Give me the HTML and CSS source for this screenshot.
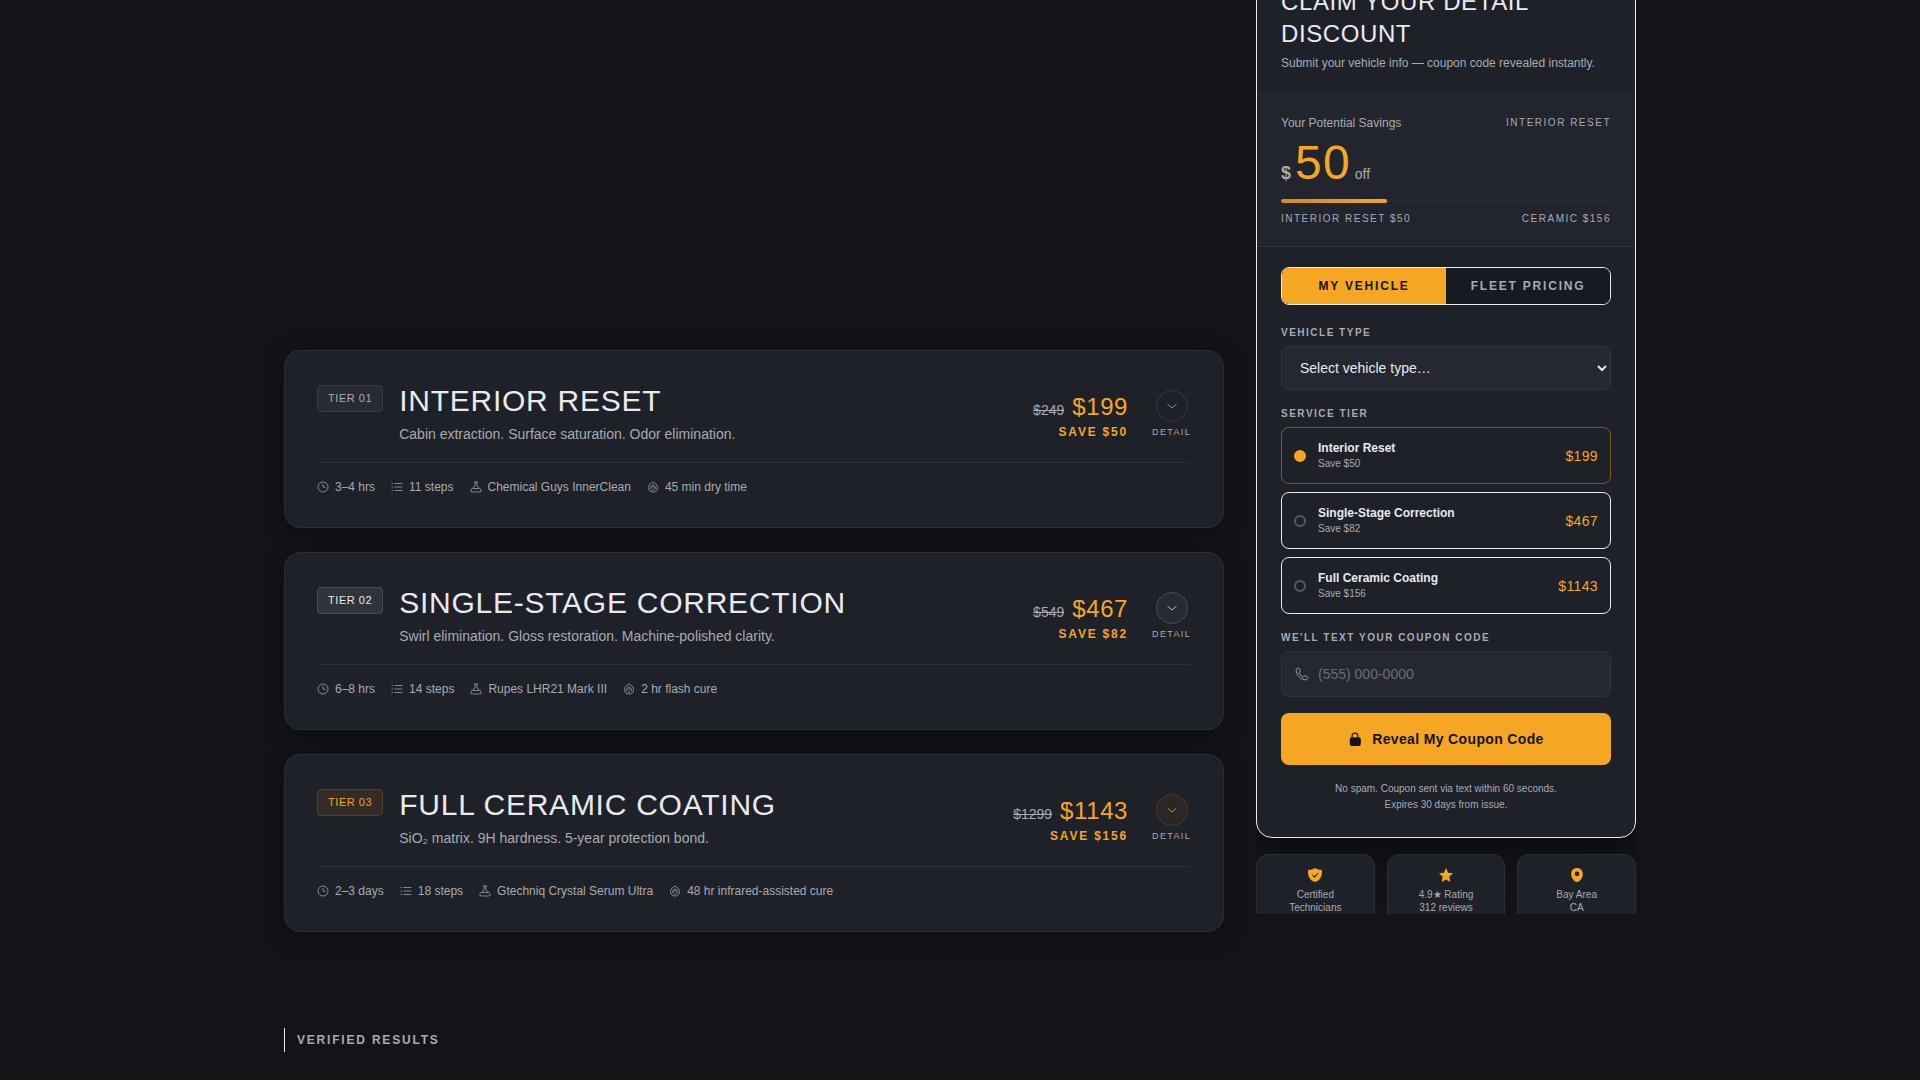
FILE: index.html
```html
<!DOCTYPE html>
<html lang="en">
<head>
    <meta charset="UTF-8">
    <meta name="viewport" content="width=device-width, initial-scale=1.0">
    <title>Detail Packages</title>
    <link rel="stylesheet" href="styles.css">
</head>
<body>
<svg class="sprite" aria-hidden="true">
    <symbol id="icon-clock" viewBox="0 0 24 24"><circle cx="12" cy="12" r="10"/><path d="M12 6v6l5 1"/></symbol>
    <symbol id="icon-list" viewBox="0 0 24 24"><path d="M7 5h16M7 12h16M7 19h16M1 5h3M1 12h3M1 19h3"/></symbol>
    <symbol id="icon-flask" viewBox="0 0 24 24"><path d="M8 2h8M10 2v8l-8 7q-2 5 3 5h14q5 0 3-5l-8-7V2M6 15h12"/></symbol>
    <symbol id="icon-cure" viewBox="0 0 24 24"><path d="M12 2c2 2 4 2 6 4 5 5 4 16-6 16S1 11 6 6c2-2 4-2 6-4z"/><path d="M8 17c-2-4 0-8 4-9 4 1 6 5 4 9M12 21v-5M9 13c2-2 4-2 6 0"/></symbol>
    <symbol id="icon-chevron" viewBox="0 0 24 24"><path d="M3 8l9 8 9-8"/></symbol>
    <symbol id="icon-phone" viewBox="0 0 24 24"><path d="M2 5c0 9 8 17 17 17 2 0 3-2 3-4 0-1-1-2-5-3-1 0-2 2-3 2-3-1-6-4-7-7 0-1 2-2 2-3C8 3 7 2 6 2 4 2 2 3 2 5z"/></symbol>
    <symbol id="icon-lock" viewBox="0 0 24 24"><path d="M7 10V7a5 5 0 0 1 10 0v3" fill="none" stroke="currentColor" stroke-width="2"/><rect x="3" y="9" width="19" height="15" rx="4"/></symbol>
    <symbol id="icon-shield" viewBox="0 0 24 24"><path fill-rule="evenodd" d="M12 0c3 2 6 3 10 3 1 0 2 1 2 2 0 10-3 16-12 19C3 21 0 15 0 5c0-1 1-2 2-2 4 0 7-1 10-3zM7 12l4 5 7-8-1-1-6 6-3-3z"/></symbol>
    <symbol id="icon-star" viewBox="0 0 24 24"><path d="M12 0l3.600 8 8.400 1-6.300 6 1.700 9-7.400-4.500L4.600 24l1.700-9L0 9l8.400-1z"/></symbol>
    <symbol id="icon-pin" viewBox="0 0 24 24"><path fill-rule="evenodd" d="M12 0c6 0 10 4 10 10 0 7-5 14-10 14S2 17 2 10C2 4 6 0 12 0zM12 6a4 4 0 1 0 0 8 4 4 0 0 0 0-8z"/></symbol>
</svg>

<div class="layout">
    <main class="tiers">
        <article class="tier tier-1">
            <div class="tier-head">
                <span class="badge">TIER 01</span>
                <div class="tier-name">
                    <h2>INTERIOR RESET</h2>
                    <p>Cabin extraction. Surface saturation. Odor elimination.</p>
                </div>
                <div class="tier-price">
                    <div class="amounts"><s>$249</s><strong>$199</strong></div>
                    <div class="save">SAVE $50</div>
                </div>
                <button class="detail" type="button">
                    <span class="circle"><svg><use href="#icon-chevron"/></svg></span>
                    DETAIL
                </button>
            </div>
            <ul class="meta">
                <li><svg><use href="#icon-clock"/></svg>3–4 hrs</li>
                <li><svg><use href="#icon-list"/></svg>11 steps</li>
                <li><svg><use href="#icon-flask"/></svg>Chemical Guys InnerClean</li>
                <li><svg><use href="#icon-cure"/></svg>45 min dry time</li>
            </ul>
        </article>

        <article class="tier tier-2">
            <div class="tier-head">
                <span class="badge">TIER 02</span>
                <div class="tier-name">
                    <h2>SINGLE-STAGE CORRECTION</h2>
                    <p>Swirl elimination. Gloss restoration. Machine-polished clarity.</p>
                </div>
                <div class="tier-price">
                    <div class="amounts"><s>$549</s><strong>$467</strong></div>
                    <div class="save">SAVE $82</div>
                </div>
                <button class="detail" type="button">
                    <span class="circle"><svg><use href="#icon-chevron"/></svg></span>
                    DETAIL
                </button>
            </div>
            <ul class="meta">
                <li><svg><use href="#icon-clock"/></svg>6–8 hrs</li>
                <li><svg><use href="#icon-list"/></svg>14 steps</li>
                <li><svg><use href="#icon-flask"/></svg>Rupes LHR21 Mark III</li>
                <li><svg><use href="#icon-cure"/></svg>2 hr flash cure</li>
            </ul>
        </article>

        <article class="tier tier-3">
            <div class="tier-head">
                <span class="badge">TIER 03</span>
                <div class="tier-name">
                    <h2>FULL CERAMIC COATING</h2>
                    <p>SiO₂ matrix. 9H hardness. 5-year protection bond.</p>
                </div>
                <div class="tier-price">
                    <div class="amounts"><s>$1299</s><strong>$1143</strong></div>
                    <div class="save">SAVE $156</div>
                </div>
                <button class="detail" type="button">
                    <span class="circle"><svg><use href="#icon-chevron"/></svg></span>
                    DETAIL
                </button>
            </div>
            <ul class="meta">
                <li><svg><use href="#icon-clock"/></svg>2–3 days</li>
                <li><svg><use href="#icon-list"/></svg>18 steps</li>
                <li><svg><use href="#icon-flask"/></svg>Gtechniq Crystal Serum Ultra</li>
                <li><svg><use href="#icon-cure"/></svg>48 hr infrared-assisted cure</li>
            </ul>
        </article>

        <h3 class="section-title">VERIFIED RESULTS</h3>
    </main>

    <aside class="sidebar">
        <form class="claim">
            <header class="claim-head">
                <h2>CLAIM YOUR DETAIL DISCOUNT</h2>
                <p>Submit your vehicle info — coupon code revealed instantly.</p>
            </header>

            <section class="savings">
                <div class="split">
                    <span class="savings-label">Your Potential Savings</span>
                    <span class="caps">INTERIOR RESET</span>
                </div>
                <div class="savings-amount">
                    <span class="currency">$</span>
                    <span class="number">50</span>
                    <span class="off">off</span>
                </div>
                <div class="bar"><div class="bar-fill" style="width: 32%"></div></div>
                <div class="split range">
                    <span class="caps">INTERIOR RESET $50</span>
                    <span class="caps">CERAMIC $156</span>
                </div>
            </section>

            <div class="claim-body">
                <div class="toggle">
                    <button class="active" type="button">MY VEHICLE</button>
                    <button type="button">FLEET PRICING</button>
                </div>

                <label class="field-label" for="vehicleType">VEHICLE TYPE</label>
                <select id="vehicleType">
                    <option>Select vehicle type…</option>
                    <option>Sedan</option>
                    <option>SUV</option>
                    <option>Truck</option>
                </select>

                <fieldset>
                    <legend class="field-label">SERVICE TIER</legend>
                    <label class="option">
                        <input type="radio" name="tier" checked>
                        <span class="option-text"><b>Interior Reset</b><small>Save $50</small></span>
                        <span class="option-price">$199</span>
                    </label>
                    <label class="option">
                        <input type="radio" name="tier">
                        <span class="option-text"><b>Single-Stage Correction</b><small>Save $82</small></span>
                        <span class="option-price">$467</span>
                    </label>
                    <label class="option">
                        <input type="radio" name="tier">
                        <span class="option-text"><b>Full Ceramic Coating</b><small>Save $156</small></span>
                        <span class="option-price">$1143</span>
                    </label>
                </fieldset>

                <label class="field-label" for="phone">WE'LL TEXT YOUR COUPON CODE</label>
                <div class="phone">
                    <svg><use href="#icon-phone"/></svg>
                    <input type="tel" id="phone" placeholder="(555) 000-0000">
                </div>

                <button class="submit" type="submit">
                    <svg><use href="#icon-lock"/></svg>
                    Reveal My Coupon Code
                </button>
                <p class="fine-print">No spam. Coupon sent via text within 60 seconds.<br>Expires 30 days from issue.</p>
            </div>
        </form>

        <ul class="trust">
            <li><svg><use href="#icon-shield"/></svg>Certified<br>Technicians</li>
            <li><svg><use href="#icon-star"/></svg>4.9★ Rating<br>312 reviews</li>
            <li><svg><use href="#icon-pin"/></svg>Bay Area<br>CA</li>
        </ul>
    </aside>
</div>
</body>
</html>
```
FILE: styles.css
```css
* {
    box-sizing: border-box;
    margin: 0;
    padding: 0;
}
:root {
    --bg: #121418;
    --card: #1e2128;
    --raised: #252830;
    --line: #2b2e36;
    --text: #e8eaed;
    --muted: #a8abb2;
    --amber: #f5a623;
}
body {
    background: var(--bg);
    color: var(--text);
    font-family: "Liberation Sans", Arial, sans-serif;
    font-size: 14px;
}
ul {
    list-style: none;
}
button, input, select {
    font-family: inherit;
    color: inherit;
}
svg {
    flex: none;
    width: 12px;
    height: 12px;
    fill: none;
    stroke: currentColor;
    stroke-width: 1.5;
}
.sprite {
    display: none;
}
.layout {
    display: grid;
    grid-template-columns: 1fr 380px;
    gap: 32px;
    align-items: start;
    max-width: 1400px;
    margin: 0 auto;
    padding: 0 24px;
}

/* Tier cards */
.tiers {
    display: flex;
    flex-direction: column;
    gap: 24px;
    padding: 350px 0 28px;
}
.tier {
    padding: 32px;
    background: var(--card);
    border: 1px solid var(--line);
    border-radius: 16px;
    box-shadow: 0 4px 24px rgba(0, 0, 0, 0.4);
}
.tier-head {
    display: flex;
    align-items: flex-start;
    padding-bottom: 17px;
    border-bottom: 1px solid var(--line);
}
.badge {
    margin: 2px 16px 0 0;
    padding: 0 10px;
    border: 1px solid #393c44;
    border-radius: 4px;
    background: #282b33;
    color: var(--muted);
    font-size: 11px;
    line-height: 25px;
    letter-spacing: 0.05em;
}
.tier-name {
    flex: 1;
}
.tier-name h2 {
    font-size: 30px;
    font-weight: 400;
    line-height: 36px;
    letter-spacing: 0.025em;
}
.tier-name p {
    margin-top: 4px;
    color: var(--muted);
    line-height: 22px;
}
.tier-price {
    margin: 10px 24px 0 0;
    text-align: right;
}
.amounts {
    display: flex;
    justify-content: flex-end;
    align-items: baseline;
    gap: 8px;
    line-height: 28px;
}
.amounts s {
    color: var(--muted);
}
.amounts strong {
    color: var(--amber);
    font-size: 24px;
    font-weight: 400;
    line-height: 28px;
    letter-spacing: 0.025em;
}
.save {
    color: var(--amber);
    font-size: 12px;
    font-weight: 700;
    line-height: 16px;
    letter-spacing: 0.15em;
}
.detail {
    display: flex;
    flex-direction: column;
    align-items: center;
    gap: 4px;
    margin-top: 7px;
    border: 0;
    background: none;
    color: var(--muted);
    font-size: 9px;
    line-height: 12px;
    letter-spacing: 0.15em;
    cursor: pointer;
}
.circle {
    display: grid;
    place-items: center;
    width: 32px;
    height: 32px;
    border: 1px solid #34373e;
    border-radius: 50%;
}
.meta {
    display: flex;
    flex-wrap: wrap;
    gap: 16px;
    padding-top: 16px;
    color: var(--muted);
    font-size: 12px;
    line-height: 16px;
}
.meta li {
    display: flex;
    align-items: center;
    gap: 6px;
}
.tier-2 .badge {
    border-color: #4a4d55;
    background: #30333a;
    color: var(--text);
}
.tier-2 .circle {
    border-color: #4a4d55;
    background: #282b32;
    color: var(--text);
}
.tier-3 .badge {
    border-color: #54401f;
    background: #322b26;
    color: var(--amber);
}
.tier-3 .circle {
    border-color: #493921;
    background: #2a2626;
    color: var(--amber);
}
.section-title {
    margin-top: 72px;
    padding-left: 12px;
    border-left: 1px solid var(--text);
    color: var(--muted);
    font-size: 12px;
    line-height: 24px;
    letter-spacing: 0.15em;
}

/* Claim panel */
.sidebar {
    position: sticky;
    top: 0;
    max-height: calc(100vh - 166px);
    overflow: hidden;
}
.claim {
    margin-top: -23px;
    background: var(--card);
    border: 1px solid var(--text);
    border-radius: 16px;
    box-shadow: 0 8px 48px rgba(0, 0, 0, 0.6);
}
.claim-head {
    padding: 8px 24px 20px;
}
.claim-head h2 {
    font-size: 24px;
    font-weight: 400;
    line-height: 32px;
    letter-spacing: 0.025em;
}
.claim-head p {
    margin-top: 3px;
    color: var(--muted);
    font-size: 12px;
    line-height: 20px;
}
.savings {
    padding: 20px 24px;
    border-top: 1px solid var(--raised);
    border-bottom: 1px solid #30333b;
    background: #22252d;
}
.split {
    display: flex;
    justify-content: space-between;
    line-height: 18px;
}
.range {
    line-height: 15px;
}
.savings-label {
    color: var(--muted);
    font-size: 12px;
}
.caps {
    color: var(--muted);
    font-size: 10px;
    letter-spacing: 0.15em;
}
.savings-amount {
    display: flex;
    align-items: baseline;
    gap: 4px;
    margin: 7px 0 12px;
    color: var(--muted);
    line-height: 1;
}
.currency {
    font-size: 18px;
    font-weight: 700;
}
.number {
    color: var(--amber);
    font-size: 48px;
    letter-spacing: 0.025em;
}
.bar {
    height: 4px;
    margin-bottom: 8px;
    border-radius: 2px;
    background: var(--raised);
}
.bar-fill {
    height: 100%;
    border-radius: 2px;
    background: linear-gradient(90deg, #d4891a, #f5a623);
}
.claim-body {
    padding: 20px 24px 24px;
}
.toggle {
    display: flex;
    height: 38px;
    margin-bottom: 20px;
    border: 1px solid var(--text);
    border-radius: 8px;
    overflow: hidden;
}
.toggle button {
    flex: 1;
    border: 0;
    background: #171a20;
    color: var(--muted);
    font-size: 12px;
    font-weight: 700;
    letter-spacing: 0.15em;
    cursor: pointer;
}
.toggle .active {
    background: var(--amber);
    color: var(--bg);
}
.field-label {
    display: block;
    margin-bottom: 6px;
    color: var(--muted);
    font-size: 10px;
    font-weight: 700;
    line-height: 15px;
    letter-spacing: 0.15em;
}
select {
    width: 100%;
    height: 44px;
    margin-bottom: 16px;
    padding-left: 14px;
    border: 1px solid #30333b;
    border-radius: 8px;
    background: var(--raised);
    font-size: 14px;
}
fieldset {
    margin-bottom: 16px;
    border: 0;
}
.option {
    display: flex;
    align-items: center;
    gap: 12px;
    height: 57px;
    padding: 0 12px;
    border: 1px solid var(--text);
    border-radius: 8px;
    cursor: pointer;
}
.option + .option {
    margin-top: 8px;
}
.option:has(:checked) {
    border-color: #7b5a26;
}
.option input {
    appearance: none;
    width: 12px;
    height: 12px;
    border: 2px solid #55585f;
    border-radius: 50%;
}
.option input:checked {
    border-color: var(--amber);
    background: var(--amber);
}
.option-text {
    display: flex;
    flex: 1;
    flex-direction: column;
    font-size: 12px;
    line-height: 16px;
}
.option-text small {
    color: var(--muted);
    font-size: 10px;
}
.option-price {
    color: var(--amber);
    font-size: 14px;
    letter-spacing: 0.025em;
}
.phone {
    display: flex;
    align-items: center;
    gap: 8px;
    height: 46px;
    margin-bottom: 16px;
    padding: 0 12px;
    border: 1px solid #30333b;
    border-radius: 8px;
    background: var(--raised);
    color: var(--muted);
}
.phone svg {
    width: 16px;
    height: 14px;
}
.phone input {
    flex: 1;
    border: 0;
    outline: 0;
    background: none;
    font-size: 14px;
}
.phone input::placeholder {
    color: #6b6e76;
}
.submit {
    display: flex;
    align-items: center;
    justify-content: center;
    gap: 10px;
    width: 100%;
    height: 52px;
    border: 0;
    border-radius: 8px;
    background: var(--amber);
    color: var(--bg);
    font-size: 14px;
    font-weight: 700;
    letter-spacing: 0.025em;
    cursor: pointer;
}
.submit svg {
    width: 14px;
    height: 14px;
    fill: currentColor;
    stroke: none;
}
.fine-print {
    margin-top: 16px;
    color: var(--muted);
    font-size: 10px;
    line-height: 16px;
    text-align: center;
}

/* Trust badges */
.trust {
    display: grid;
    grid-template-columns: repeat(3, 1fr);
    gap: 12px;
    margin-top: 16px;
}
.trust li {
    position: relative;
    padding: 13px 8px;
    border: 1px solid var(--line);
    border-radius: 12px;
    background: var(--card);
    color: var(--muted);
    font-size: 10px;
    line-height: 13px;
    text-align: center;
}
.trust svg {
    display: block;
    width: 14px;
    height: 14px;
    margin: 0 auto 6px;
    fill: var(--amber);
    stroke: none;
}
```
